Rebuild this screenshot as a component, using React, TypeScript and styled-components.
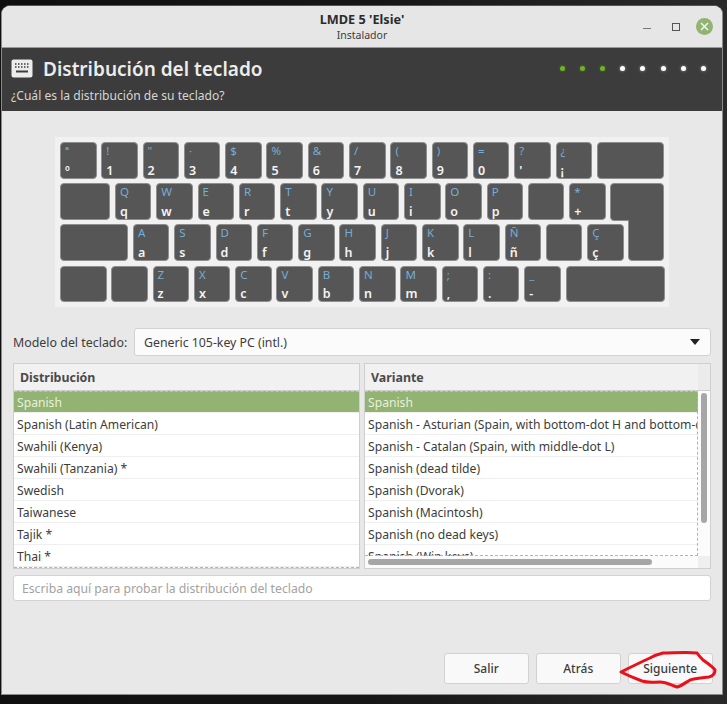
import React from 'react';
import styled, { createGlobalStyle } from 'styled-components';

const FONT = '"Noto Sans", "Open Sans", sans-serif';

const GlobalStyle = createGlobalStyle`
    html, body {
        margin: 0;
        background: #1b1b1b;
    }
`;

const Page = styled.div`
    position: relative;
    width: 727px;
    height: 704px;
    padding: 5px 0 0 1px;
    box-sizing: border-box;
    overflow: hidden;
    background: linear-gradient(90deg, #0f0f0f 0%, #161616 50%, #2a2a2a 100%);
    font-family: ${FONT};
`;

const Window = styled.div`
    display: flex;
    flex-direction: column;
    width: 722px;
    height: 690px;
    box-sizing: border-box;
    border: 1px solid #8b8b8b;
    border-top-color: #555;
    border-radius: 9px 9px 0 0;
    background: #e8e8e8;
    overflow: hidden;
`;

//Barra de titulo.
const TitleBar = styled.div`
    position: relative;
    display: flex;
    flex-direction: column;
    align-items: center;
    height: 42px;
    padding-top: 5px;
    box-sizing: border-box;
    border-bottom: 1px solid #9a9a9a;
    background: #e6e6e6;
`;

const Title = styled.div`
    font-size: 12.7px;
    line-height: 17px;
    font-weight: 700;
    color: #2c2c2c;
`;

const SubTitle = styled.div`
    font-size: 10.5px;
    line-height: 14px;
    color: #3c3c3c;
`;

const WindowControls = styled.div`
    position: absolute;
    right: 9px;
    top: 12px;
    display: flex;
    align-items: center;
`;

const Minimize = styled.div`
    width: 8px;
    height: 1.5px;
    margin: 4px 21px 0 0;
    background: #777;
`;

const Maximize = styled.div`
    width: 8px;
    height: 8px;
    margin-right: 16px;
    box-sizing: border-box;
    border: 1px solid #555;
    border-top-width: 1.5px;
`;

const CloseButton = styled.div`
    display: flex;
    align-items: center;
    justify-content: center;
    width: 17px;
    height: 17px;
    border-radius: 50%;
    background: #92b372;
`;

//Cabecera oscura.
const Header = styled.div`
    display: flex;
    justify-content: space-between;
    height: 63px;
    padding: 0 16px 0 9px;
    background: #3c3c3c;
`;

const HeaderText = styled.div`
    display: flex;
    flex-direction: column;
`;

const HeaderTop = styled.div`
    display: flex;
    align-items: center;
    gap: 10px;
    height: 41px;
`;

const HeaderTitle = styled.div`
    font-size: 19px;
    font-weight: 600;
    color: #ececec;
`;

const HeaderSub = styled.div`
    font-size: 12.1px;
    line-height: 14px;
    color: #d6d6d6;
`;

const Steps = styled.div`
    display: flex;
    align-items: center;
    gap: 15.2px;
    height: 41px;
`;

const Step = styled.div<{ $done: boolean }>`
    width: 5px;
    height: 5px;
    border-radius: 50%;
    background: ${(props) => (props.$done ? '#6fb31f' : '#ffffff')};
    box-shadow: 0 0 3px ${(props) => (props.$done ? 'rgba(111, 179, 31, .5)' : 'rgba(255, 255, 255, .5)')};
`;

const Body = styled.div`
    display: flex;
    flex: 1;
    flex-direction: column;
    padding: 26px 11px 10px;
`;

//Teclado.
const KeyboardPanel = styled.div`
    position: relative;
    display: flex;
    flex-direction: column;
    gap: 4.7px;
    align-self: center;
    width: 614px;
    height: 170px;
    padding: 5px;
    box-sizing: border-box;
    background: #f1f1f1;
`;

const KeyRow = styled.div`
    display: flex;
    gap: 4.8px;
`;

const Key = styled.div<{ $width?: number }>`
    display: flex;
    flex: none;
    flex-direction: column;
    justify-content: space-between;
    width: ${(props) => props.$width || 36.5}px;
    height: 36.5px;
    padding: 1px 0 0 4px;
    box-sizing: border-box;
    border: 1px solid #8e8e8e;
    border-radius: 4px;
    background: #565656;
`;

const KeyUpper = styled.span`
    font-size: 11.5px;
    line-height: 14px;
    color: #74aed6;
`;

const KeyLower = styled.span`
    font-size: 12.5px;
    line-height: 15px;
    font-weight: 600;
    color: #f4f4f4;
`;

const EnterKey = styled.svg`
    position: absolute;
    left: 555px;
    top: 46px;
`;

//Modelo.
const ModelRow = styled.div`
    display: flex;
    align-items: center;
    margin-top: 21px;
`;

const ModelLabel = styled.div`
    width: 121px;
    font-size: 12.4px;
    color: #3c3c3c;
`;

const ComboBox = styled.div`
    display: flex;
    flex: 1;
    align-items: center;
    justify-content: space-between;
    height: 28px;
    padding: 0 10px 0 9px;
    box-sizing: border-box;
    border: 1px solid #d2d2d2;
    border-radius: 3px;
    background: #fbfbfb;
    font-size: 12.3px;
    color: #3c3c3c;
`;

const ComboArrow = styled.div`
    width: 0;
    height: 0;
    border-left: 5.5px solid transparent;
    border-right: 5.5px solid transparent;
    border-top: 6px solid #222;
`;

//Listas.
const Lists = styled.div`
    display: flex;
    gap: 4px;
    margin-top: 7px;
`;

const ListBox = styled.div`
    display: grid;
    grid-template-columns: minmax(0, 1fr) auto;
    grid-template-rows: 27px 1fr auto;
    flex: 1;
    min-width: 0;
    height: 206px;
    box-sizing: border-box;
    border: 1px solid #cfcfcf;
    background: #ffffff;
    overflow: hidden;
`;

const ListHeader = styled.div<{ $full?: boolean }>`
    grid-column: ${(props) => (props.$full ? '1 / 3' : '1')};
    display: flex;
    align-items: center;
    padding-left: 6px;
    border-bottom: 1px solid #cfcfcf;
    background: #f1f1f1;
    font-size: 12.4px;
    font-weight: 700;
    color: #4a4a4a;
`;

const HeaderCorner = styled.div`
    width: 12px;
    border-bottom: 1px solid #cfcfcf;
    background: #ebebeb;
`;

const Viewport = styled.div<{ $full?: boolean }>`
    position: relative;
    grid-column: ${(props) => (props.$full ? '1 / 3' : '1')};
    grid-row: ${(props) => (props.$full ? '2 / 4' : '2')};
    min-width: 0;
    overflow: hidden;
`;

//Linea de foco punteada, encima de las filas.
const FocusLines = styled.div<{ $side?: boolean }>`
    position: absolute;
    inset: 0;
    border-top: 1px dashed #b9c7aa;
    border-bottom: 1px dashed #b4b4b4;
    border-right: ${(props) => (props.$side ? '1px dashed #b4b4b4' : 'none')};
`;

const Row = styled.div<{ $selected?: boolean }>`
    height: 22px;
    padding: 1px 0 0 3px;
    box-sizing: border-box;
    border-bottom: 1px solid #efefef;
    background: ${(props) => (props.$selected ? '#92b372' : '#ffffff')};
    font-size: 12.15px;
    line-height: 21px;
    white-space: nowrap;
    overflow: hidden;
    color: ${(props) => (props.$selected ? '#e8f0df' : '#3c3c3c')};
`;

const VTrack = styled.div`
    width: 12px;
    padding: 2px 3px 0 3px;
    box-sizing: border-box;
    background: #fbfbfb;
`;

const VThumb = styled.div`
    height: 130px;
    border-radius: 3px;
    background: #a6a6a6;
`;

const HTrack = styled.div`
    grid-column: 1;
    height: 12px;
    padding: 3px 0 0 3px;
    box-sizing: border-box;
    background: #fbfbfb;
`;

const HThumb = styled.div`
    width: 284px;
    height: 6px;
    border-radius: 3px;
    background: #a6a6a6;
`;

const ScrollCorner = styled.div`
    background: #efefef;
`;

const TestInput = styled.div`
    display: flex;
    align-items: center;
    height: 26px;
    margin-top: 6px;
    padding-left: 8px;
    box-sizing: border-box;
    border: 1px solid #d2d2d2;
    border-radius: 3px;
    background: #ffffff;
    font-size: 12.2px;
    color: #a2a2a2;
`;

const Buttons = styled.div`
    display: flex;
    justify-content: flex-end;
    gap: 6.5px;
    margin: auto -2px 0 0;
`;

const Button = styled.div`
    display: flex;
    align-items: center;
    justify-content: center;
    width: 85.5px;
    height: 31.5px;
    box-sizing: border-box;
    border: 1px solid #d2d2d2;
    border-radius: 3px;
    background: #f9f9f9;
    font-size: 12px;
    font-weight: 500;
    color: #3c3c3c;
`;

//Trazo rojo dibujado a mano sobre la captura.
const Scribble = styled.svg`
    position: absolute;
    left: 615px;
    top: 645px;
`;

const row1 = [['ª', 'º'], ['!', '1'], ['"', '2'], ['·', '3'], ['$', '4'], ['%', '5'], ['&', '6'], ['/', '7'], ['(', '8'], [')', '9'], ['=', '0'], ['?', "'"], ['¿', '¡']];
const row2 = [['Q', 'q'], ['W', 'w'], ['E', 'e'], ['R', 'r'], ['T', 't'], ['Y', 'y'], ['U', 'u'], ['I', 'i'], ['O', 'o'], ['P', 'p'], ['', ''], ['*', '+']];
const row3 = [['A', 'a'], ['S', 's'], ['D', 'd'], ['F', 'f'], ['G', 'g'], ['H', 'h'], ['J', 'j'], ['K', 'k'], ['L', 'l'], ['Ñ', 'ñ'], ['', ''], ['Ç', 'ç']];
const row4 = [['Z', 'z'], ['X', 'x'], ['C', 'c'], ['V', 'v'], ['B', 'b'], ['N', 'n'], ['M', 'm'], [';', ','], [':', '.'], ['_', '-']];

const layouts = ['Spanish', 'Spanish (Latin American)', 'Swahili (Kenya)', 'Swahili (Tanzania) *', 'Swedish', 'Taiwanese', 'Tajik *', 'Thai *'];
const variants = [
    'Spanish',
    'Spanish - Asturian (Spain, with bottom-dot H and bottom-dot L)',
    'Spanish - Catalan (Spain, with middle-dot L)',
    'Spanish (dead tilde)',
    'Spanish (Dvorak)',
    'Spanish (Macintosh)',
    'Spanish (no dead keys)',
    'Spanish (Win keys)',
];

const renderKeys = (keys: string[][]) =>
    keys.map(([upper, lower], i) => (
        <Key key={i}>
            <KeyUpper>{upper}</KeyUpper>
            <KeyLower>{lower}</KeyLower>
        </Key>
    ));

export default function App() {
    return (
        <Page>
            <GlobalStyle />
            <Window>
                <TitleBar>
                    <Title>LMDE 5 'Elsie'</Title>
                    <SubTitle>Instalador</SubTitle>
                    <WindowControls>
                        <Minimize />
                        <Maximize />
                        <CloseButton>
                            <svg width="9" height="9" viewBox="0 0 9 9">
                                <path d="M1 1 L8 8 M8 1 L1 8" stroke="#f4f4f4" strokeWidth="1.5" />
                            </svg>
                        </CloseButton>
                    </WindowControls>
                </TitleBar>
                <Header>
                    <HeaderText>
                        <HeaderTop>
                            <svg width="22" height="19" viewBox="0 0 22 19">
                                <rect x="0.5" y="0.5" width="21" height="18" rx="2" fill="#ececec" />
                                <path d="M4 5h1.5M7 5h1.5M10 5h1.5M13 5h1.5M16 5h1.5M4 8h1.5M7 8h1.5M10 8h1.5M13 8h1.5M16 8h1.5" stroke="#3c3c3c" strokeWidth="1.5" />
                                <path d="M5 12.5h12" stroke="#3c3c3c" strokeWidth="2" />
                            </svg>
                            <HeaderTitle>Distribución del teclado</HeaderTitle>
                        </HeaderTop>
                        <HeaderSub>¿Cuál es la distribución de su teclado?</HeaderSub>
                    </HeaderText>
                    <Steps>
                        {[0, 1, 2, 3, 4, 5, 6, 7].map((i) => (
                            <Step key={i} $done={i < 3} />
                        ))}
                    </Steps>
                </Header>
                <Body>
                    <KeyboardPanel>
                        <KeyRow>
                            {renderKeys(row1)}
                            <Key $width={67} />
                        </KeyRow>
                        <KeyRow>
                            <Key $width={50.2} />
                            {renderKeys(row2)}
                        </KeyRow>
                        <KeyRow>
                            <Key $width={68.2} />
                            {renderKeys(row3)}
                        </KeyRow>
                        <KeyRow>
                            <Key $width={46.5} />
                            <Key />
                            {renderKeys(row4)}
                            <Key $width={99} />
                        </KeyRow>
                        <EnterKey width="55" height="79" viewBox="0 0 55 79">
                            <path
                                d="M4 0.5 H50 a3.5 3.5 0 0 1 3.5 3.5 V74 a3.5 3.5 0 0 1 -3.5 3.5 H22 a3.5 3.5 0 0 1 -3.5 -3.5 V37.5 H4 a3.5 3.5 0 0 1 -3.5 -3.5 V4 a3.5 3.5 0 0 1 3.5 -3.5 Z"
                                fill="#565656"
                                stroke="#8e8e8e"
                            />
                        </EnterKey>
                    </KeyboardPanel>
                    <ModelRow>
                        <ModelLabel>Modelo del teclado:</ModelLabel>
                        <ComboBox>
                            Generic 105-key PC (intl.)
                            <ComboArrow />
                        </ComboBox>
                    </ModelRow>
                    <Lists>
                        <ListBox>
                            <ListHeader $full>Distribución</ListHeader>
                            <Viewport $full>
                                {layouts.map((name, i) => (
                                    <Row key={name} $selected={i === 0}>{name}</Row>
                                ))}
                                <FocusLines />
                            </Viewport>
                        </ListBox>
                        <ListBox>
                            <ListHeader>Variante</ListHeader>
                            <HeaderCorner />
                            <Viewport>
                                {variants.map((name, i) => (
                                    <Row key={name} $selected={i === 0}>{name}</Row>
                                ))}
                                <FocusLines $side />
                            </Viewport>
                            <VTrack>
                                <VThumb />
                            </VTrack>
                            <HTrack>
                                <HThumb />
                            </HTrack>
                            <ScrollCorner />
                        </ListBox>
                    </Lists>
                    <TestInput>Escriba aquí para probar la distribución del teclado</TestInput>
                    <Buttons>
                        <Button>Salir</Button>
                        <Button>Atrás</Button>
                        <Button>Siguiente</Button>
                    </Buttons>
                </Body>
            </Window>
            <Scribble width="104" height="50" viewBox="0 0 104 50">
                <path
                    d="M6 27 C16 22 26 17 35 13 C40 10 44 9 48 8 C58 8 72 7 82 8 C84 11 86 13 88 15 C92 18 97 21 100 25 C100 29 98 31 94 32 C87 33 81 33 75 35 C70 38 66 41 62 42 C56 40 51 37 45 37 C38 37 33 38 27 36 C19 33 12 30 6 27 Z"
                    fill="none"
                    stroke="#ea0f18"
                    strokeWidth="3"
                    strokeLinejoin="round"
                />
            </Scribble>
        </Page>
    );
}
